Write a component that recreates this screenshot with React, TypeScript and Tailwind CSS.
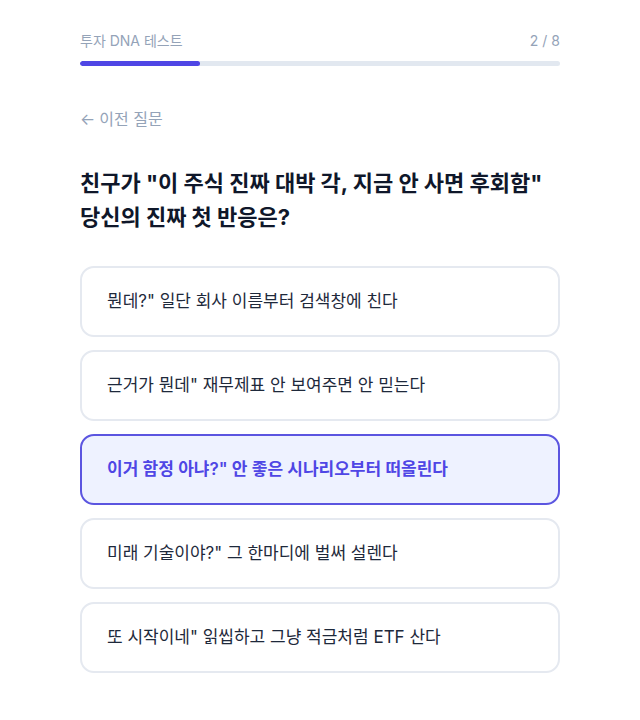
import * as React from "react";

const OPTIONS = [
  '뭔데?" 일단 회사 이름부터 검색창에 친다',
  '근거가 뭔데" 재무제표 안 보여주면 안 믿는다',
  '이거 함정 아냐?" 안 좋은 시나리오부터 떠올린다',
  '미래 기술이야?" 그 한마디에 벌써 설렌다',
  '또 시작이네" 읽씹하고 그냥 적금처럼 ETF 산다',
];

export default function App() {
  const [selected, setSelected] = React.useState(2);
  const step = 2;
  const total = 8;

  return (
    <div
      className="min-h-screen bg-white"
      style={{ fontFamily: 'Inter, "Noto Sans CJK KR", sans-serif' }}
    >
      <div className="mx-auto w-[480px] pt-[30px]">
        <div className="flex items-center justify-between text-[14px] text-[#94a3b8]">
          <span>투자 DNA 테스트</span>
          <span>
            {step} / {total}
          </span>
        </div>
        <div className="mt-[10px] h-[5px] w-full overflow-hidden rounded-full bg-[#e2e8f0]">
          <div
            className="h-full rounded-full bg-[#4f46e5]"
            style={{ width: `${(step / total) * 100}%` }}
          />
        </div>

        <button className="mt-[41px] flex items-center gap-1 text-[16px] text-[#94a3b8]">
          <span>←</span>
          <span>이전 질문</span>
        </button>

        <h1 className="mt-[35px] text-[22px] font-bold leading-[34px] text-[#0f172a]">
          친구가 "이 주식 진짜 대박 각, 지금 안 사면 후회함"
          <br />
          당신의 진짜 첫 반응은?
        </h1>

        <div className="mt-[32px] flex flex-col gap-[13px]">
          {OPTIONS.map((opt, i) => {
            const active = i === selected;
            return (
              <button
                key={opt}
                onClick={() => setSelected(i)}
                className={
                  active
                    ? "flex h-[71px] w-full items-center rounded-[14px] border-2 border-[#5b55e0] bg-[#eef2ff] px-[25px] text-left text-[17px] font-semibold text-[#4f46e5]"
                    : "flex h-[71px] w-full items-center rounded-[14px] border-2 border-[#e5e9f0] bg-white px-[25px] text-left text-[17px] text-[#1e293b]"
                }
              >
                {opt}
              </button>
            );
          })}
        </div>
      </div>
    </div>
  );
}
